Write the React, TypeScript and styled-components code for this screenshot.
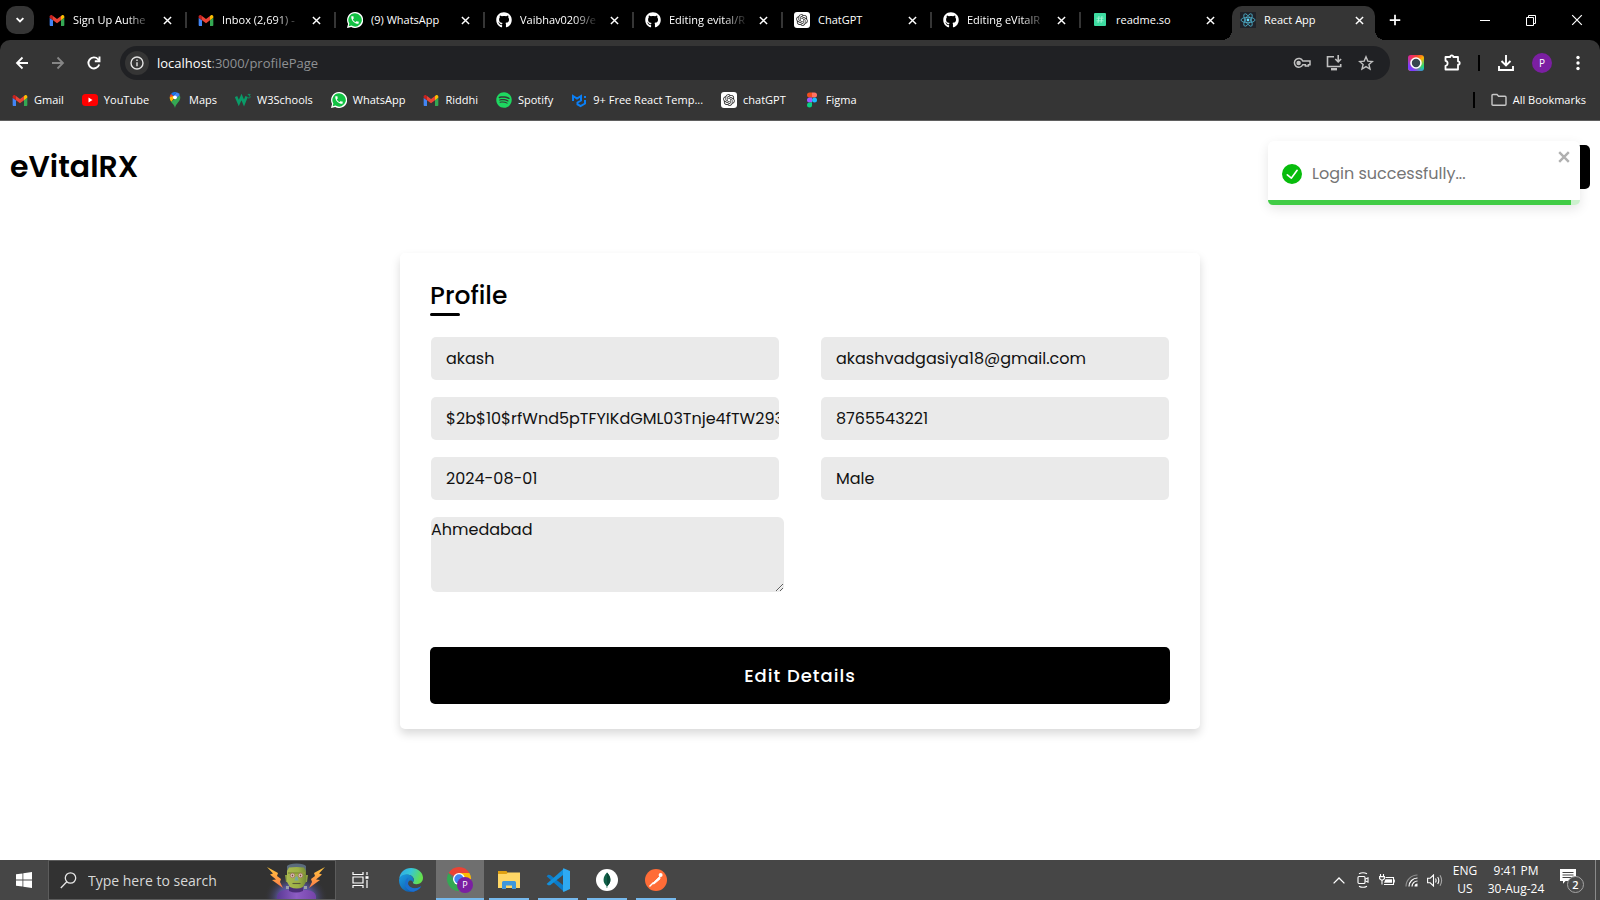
import React from "react";
import styled, { createGlobalStyle, css } from "styled-components";
import { FaGithub, FaSpotify } from "react-icons/fa";
import { RiOpenaiFill } from "react-icons/ri";

const uiFont = `"Segoe UI", "Open Sans", "Noto Sans", sans-serif`;
const pageFont = `"Poppins", "Inter", sans-serif`;

const GlobalStyle = createGlobalStyle`
  * { box-sizing: border-box; }
  body { margin: 0; background: #fff; }
  button, input, textarea { font: inherit; margin: 0; }
  button { border: 0; padding: 0; background: none; color: inherit; }
  a { color: inherit; text-decoration: none; }
`;

const Screen = styled.div`
  display: flex;
  flex-direction: column;
  min-height: 100vh;
`;

/* ---------- browser chrome ---------- */

const Browser = styled.header`
  background: #000;
  font-family: ${uiFont};
  font-size: 11px;
  line-height: 16px;
  color: #fff;
`;

const TabStrip = styled.div`
  display: flex;
  align-items: flex-start;
  height: 40px;
`;

const TabSearch = styled.button`
  display: grid;
  place-items: center;
  flex: none;
  width: 28px;
  height: 28px;
  margin: 6px 4px 0 6px;
  border-radius: 10px;
  background: #353535;
`;

const TabItem = styled.div<{ $active?: boolean; $divided?: boolean }>`
  position: relative;
  display: flex;
  align-items: center;
  flex: 0 1 149px;
  min-width: 0;
  height: 28px;
  margin-top: 6px;
  padding: 0 9px 0 11px;
  ${(p) =>
    p.$divided &&
    css`
      &::after {
        content: "";
        position: absolute;
        right: 0;
        top: 6px;
        width: 2px;
        height: 16px;
        background: #353535;
      }
    `}
  ${(p) =>
    p.$active &&
    css`
      flex-basis: 143px;
      height: 34px;
      margin-left: 2px;
      padding: 0 5px 6px 8px;
      border-radius: 10px 10px 0 0;
      background: #353535;
      &::before,
      &::after {
        content: "";
        position: absolute;
        bottom: 0;
        width: 10px;
        height: 10px;
      }
      &::before {
        right: 100%;
        background: radial-gradient(circle at 0 0, #000 10px, #353535 10px);
      }
      &::after {
        left: 100%;
        background: radial-gradient(circle at 100% 0, #000 10px, #353535 10px);
      }
    `}
`;

const TabTitle = styled.span<{ $fade?: boolean }>`
  flex: 1;
  min-width: 0;
  margin: 0 4px 0 8px;
  overflow: hidden;
  white-space: nowrap;
  ${(p) => p.$fade && css`mask-image: linear-gradient(to right, #000 68%, transparent);`}
`;

const IconButton = styled.button<{ $w?: number; $h?: number; $color?: string }>`
  display: grid;
  place-items: center;
  flex: none;
  width: ${(p) => p.$w ?? 16}px;
  height: ${(p) => p.$h ?? 16}px;
  color: ${(p) => p.$color ?? "#fff"};
`;

const WindowControls = styled.div`
  display: flex;
  margin-left: auto;
`;

const Toolbar = styled.div`
  display: flex;
  align-items: center;
  height: 46px;
  padding: 0 4px;
  border-radius: 10px 10px 0 0;
  background: #353535;
`;

const AddressBar = styled.div`
  display: flex;
  align-items: center;
  flex: 1;
  height: 34px;
  margin: 0 8px;
  padding: 0 8px 0 5px;
  border-radius: 17px;
  background: #202124;
`;

const SiteInfo = styled.button`
  display: grid;
  place-items: center;
  width: 24px;
  height: 24px;
  border-radius: 50%;
  background: #353535;
  color: #e3e3e3;
`;

const Url = styled.span`
  flex: 1;
  margin-left: 8px;
  font-size: 13px;
  color: #8f9194;
  b {
    font-weight: 400;
    color: #fff;
  }
`;

const BarDivider = styled.span`
  flex: none;
  width: 2px;
  height: 16px;
  margin: 0 8px;
  background: #000;
`;

const Avatar = styled.span`
  display: grid;
  place-items: center;
  width: 20px;
  height: 20px;
  border-radius: 50%;
  background: #7b1fa2;
  font-size: 10px;
  line-height: 20px;
`;

const Bookmarks = styled.nav`
  display: flex;
  align-items: center;
  gap: 18px;
  height: 35px;
  padding: 0 14px 6px 12px;
  background: #353535;
  border-bottom: 1px solid #5f5f5f;
`;

const Bookmark = styled.a`
  display: flex;
  align-items: center;
  gap: 6px;
  white-space: nowrap;
`;

const BookmarksEnd = styled.div`
  display: flex;
  align-items: center;
  gap: 8px;
  margin-left: auto;
`;

const Tile = styled.span`
  display: grid;
  place-items: center;
  flex: none;
  width: 16px;
  height: 16px;
  border-radius: 3px;
  background: #fff;
  color: #222;
`;

/* ---------- profile page ---------- */

const Page = styled.div`
  position: relative;
  display: flex;
  flex-direction: column;
  flex: 1;
  background: #fff;
  font-family: ${pageFont};
`;

const PageHeader = styled.div`
  display: flex;
  align-items: center;
  justify-content: space-between;
  padding: 24px 10px;
`;

const Brand = styled.h1`
  margin: 0;
  font-size: 30px;
  line-height: 44px;
  font-weight: 600;
  color: #000;
`;

const LogoutButton = styled.button`
  width: 100px;
  height: 44px;
  border-radius: 5px;
  background: #000;
`;

const Toast = styled.div`
  position: absolute;
  top: 20px;
  right: 20px;
  width: 312px;
  border-radius: 6px;
  background: #fff;
  color: #757575;
  box-shadow: 0 4px 12px rgba(0, 0, 0, 0.1);
`;

const ToastBody = styled.div`
  display: flex;
  align-items: center;
  gap: 10px;
  height: 59px;
  padding: 6px 14px 0;
  font-size: 16px;
  line-height: 24px;
`;

const ToastClose = styled.button`
  display: flex;
  align-self: flex-start;
  margin: 4px -4px 0 auto;
  color: #b0b0b0;
`;

const ToastTrack = styled.div`
  height: 5px;
  border-radius: 0 0 6px 6px;
  overflow: hidden;
  background: #cdf1ce;
`;

const ToastProgress = styled.div`
  height: 5px;
  background: #41cc46;
`;

const Card = styled.form`
  width: calc(100% - 20px);
  max-width: 800px;
  margin: 40px auto;
  padding: 25px 30px;
  border-radius: 5px;
  background: #fff;
  box-shadow: 0 5px 10px rgba(0, 0, 0, 0.15);
`;

const CardTitle = styled.h2`
  margin: 0 0 21px;
  font-size: 25px;
  line-height: 36px;
  font-weight: 500;
  color: #000;
  &::after {
    content: "";
    display: block;
    width: 30px;
    height: 3px;
    margin-top: -1px;
    border-radius: 5px;
    background: #000;
  }
`;

const Fields = styled.div`
  display: grid;
  grid-template-columns: 1fr 1fr;
  gap: 17px 42px;
  padding: 0 1px;
`;

const field = css`
  display: block;
  border: 0;
  outline: none;
  background: #eaeaea;
  font-size: 16px;
  line-height: 24px;
  color: #111;
`;

const TextField = styled.input`
  ${field}
  width: 100%;
  height: 43px;
  padding: 0 0 0 15px;
  border-radius: 5px;
`;

const AddressField = styled.textarea`
  ${field}
  width: calc(100% + 5px);
  height: 75px;
  padding: 1px 0 0;
  border-radius: 6px;
`;

const SubmitButton = styled.button`
  width: 100%;
  height: 57px;
  margin-top: 55px;
  border-radius: 5px;
  background: #000;
  color: #fff;
  font-size: 18px;
  font-weight: 500;
  letter-spacing: 1px;
`;

/* ---------- taskbar ---------- */

const Taskbar = styled.footer`
  display: flex;
  height: 40px;
  background: #464646;
  font-family: ${uiFont};
  color: #fff;
`;

const TaskButton = styled.button<{ $open?: boolean; $active?: boolean }>`
  display: flex;
  align-items: center;
  justify-content: center;
  flex: none;
  width: 48px;
  height: 40px;
  ${(p) =>
    p.$open &&
    css`
      background: linear-gradient(#76b9ed, #76b9ed) center bottom / ${p.$active ? 48 : 40}px 2px no-repeat
        ${p.$active ? "#6f6f6f" : "transparent"};
    `}
`;

const SearchBox = styled.label`
  display: flex;
  align-items: center;
  flex: none;
  width: 288px;
  padding: 0 5px 0 11px;
  border: 1px solid #5c5c5c;
  background: #323232;
`;

const SearchInput = styled.input`
  flex: 1;
  min-width: 0;
  margin-left: 11px;
  padding: 0;
  border: 0;
  outline: none;
  background: none;
  font-size: 14px;
  color: #d8d8d8;
  &::placeholder {
    color: #d8d8d8;
    opacity: 1;
  }
`;

const Apps = styled.div`
  display: flex;
  gap: 1px;
  margin-left: 3px;
`;

const Tray = styled.div`
  display: flex;
  align-items: center;
  margin-left: auto;
  font-size: 12px;
  line-height: 18px;
  text-align: center;
`;

const TrayText = styled.div<{ $w: number }>`
  width: ${(p) => p.$w}px;
  white-space: nowrap;
`;

const ShowDesktop = styled.button`
  width: 5px;
  height: 40px;
  border-left: 1px solid #8a8a8a;
`;

/* ---------- drawings ---------- */

const Gmail = () => (
  <svg width="16" height="11" viewBox="52 42 88 66">
    <path fill="#4285f4" d="M58 108h14V74L52 59v43c0 3.32 2.69 6 6 6" />
    <path fill="#34a853" d="M120 108h14c3.32 0 6-2.69 6-6V59l-20 15" />
    <path fill="#fbbc04" d="M120 48v26l20-15v-8c0-7.42-8.47-11.65-14.4-7.2" />
    <path fill="#ea4335" d="M72 74V48l24 18 24-18v26L96 92" />
    <path fill="#c5221f" d="M52 51v8l20 15V48l-5.6-4.2c-5.94-4.45-14.4-.22-14.4 7.2" />
  </svg>
);

const WhatsApp = () => (
  <svg width="16" height="16" viewBox="0 0 24 24">
    <path fill="#fff" d="M12 0a12 12 0 0 0-10.4 17.9L0 24l6.300-1.600A12 12 0 1 0 12 0z" />
    <path fill="#12c143" d="M12 2a10 10 0 0 0-8.500 15.200L2.600 21.400l4.200-1A10 10 0 1 0 12 2z" />
    <path
      transform="translate(4.500 4.500) scale(.62)"
      fill="#fff"
      d="M6.620 10.790c1.440 2.830 3.760 5.140 6.590 6.590l2.200-2.200c.27-.27.67-.36 1.020-.24 1.120.37 2.330.57 3.570.57.55 0 1 .45 1 1V20c0 .55-.45 1-1 1-9.390 0-17-7.610-17-17 0-.55.45-1 1-1h3.500c.55 0 1 .45 1 1 0 1.250.2 2.450.57 3.570.11.35.03.74-.25 1.020z"
    />
  </svg>
);

const OpenAI = () => (
  <Tile>
    <RiOpenaiFill size={14} />
  </Tile>
);

const Readme = () => (
  <svg width="16" height="16" viewBox="0 0 16 16">
    <rect x="2" y="1" width="12" height="13" rx="1" fill="#3ddba0" />
    <path d="M7 4 6 11M10 4 9 11M4.500 6.200h7M4.500 8.800h7" stroke="#a2f3d4" strokeWidth=".9" fill="none" />
  </svg>
);

const ReactLogo = () => (
  <svg width="16" height="16" viewBox="0 0 16 16">
    <rect width="16" height="16" fill="#20232a" />
    <g fill="none" stroke="#4fb3cf" strokeWidth=".8">
      <ellipse cx="8" cy="8" rx="7" ry="2.700" />
      <ellipse cx="8" cy="8" rx="7" ry="2.700" transform="rotate(60 8 8)" />
      <ellipse cx="8" cy="8" rx="7" ry="2.700" transform="rotate(120 8 8)" />
    </g>
    <circle cx="8" cy="8" r="1.400" fill="#61dafb" />
  </svg>
);

const Close = ({ size = 9, weight = 1.6 }: { size?: number; weight?: number }) => (
  <svg width={size} height={size} viewBox="0 0 10 10" fill="none" stroke="currentColor" strokeWidth={weight}>
    <path d="M1 1l8 8M9 1L1 9" />
  </svg>
);

const YouTube = () => (
  <svg width="16" height="16" viewBox="0 0 16 16">
    <rect y="2" width="16" height="12" rx="3.500" fill="#f00" />
    <path d="M6.500 5.500v5l4-2.500z" fill="#fff" />
  </svg>
);

const MapsPin = () => (
  <svg width="16" height="16" viewBox="0 0 16 16">
    <path fill="#34a853" d="M8 16c.5-2.500 1.500-3.600 2.800-5.200C12.200 9 13.300 7.800 13.300 5.300l-.5-2L4 9.800C5.600 12 7.400 13 8 16z" />
    <path fill="#4285f4" d="M9.700.3 6 4.600l2.500 2.600 4.300-4.100A5.300 5.300 0 0 0 9.700.3z" />
    <path fill="#1a73e8" d="M9.700.3A5.300 5.300 0 0 0 4 1.900l2.500 2.200z" />
    <path fill="#ea4335" d="M4 1.900a5.300 5.300 0 0 0-1.300 3.400L6 5.300l.7-1.100z" />
    <path fill="#fbbc04" d="M2.700 5.300c0 1.900.6 3.200 1.500 4.500l5-5.800L6.500 4z" />
    <circle cx="8" cy="5.300" r="1.900" fill="#fff" />
  </svg>
);

const W3 = () => (
  <svg width="16" height="16" viewBox="0 0 16 16" fill="none" stroke="#0a9b68">
    <path strokeWidth="2.600" d="M1 4.500l2.800 6.500L6.500 5 9 11l2.600-6.500" />
    <path strokeWidth=".9" d="M12.800 2.400h2.400l-1.200 1.400c2 .2 1.400 2.200-.2 2.200l-1-.4" />
  </svg>
);

const Mui = () => (
  <svg width="16" height="16" viewBox="0 0 16 16" fill="none" stroke="#0a7ff5" strokeWidth="2">
    <path d="M2 9V4l4 2.600L10 4v4.500L6.500 10.500v2l3 1.500 4.500-2.500V8M14 6V4" />
  </svg>
);

const Figma = () => (
  <svg width="16" height="16" viewBox="0 0 16 16">
    <path fill="#f24e1e" d="M8 .5H5.500a2.500 2.500 0 0 0 0 5H8z" />
    <path fill="#ff7262" d="M8 .5h2.500a2.500 2.500 0 0 1 0 5H8z" />
    <path fill="#a259ff" d="M8 5.500H5.500a2.500 2.500 0 0 0 0 5H8z" />
    <circle cx="10.500" cy="8" r="2.500" fill="#1abcfe" />
    <path fill="#0acf83" d="M5.500 10.500H8V13a2.500 2.500 0 1 1-2.500-2.500z" />
  </svg>
);

const Glyph = ({ d, size = 16, w = 2 }: { d: string; size?: number; w?: number }) => (
  <svg width={size} height={size} viewBox="0 0 16 16" fill="none" stroke="currentColor" strokeWidth={w}>
    <path d={d} />
  </svg>
);

const Key = () => (
  <svg width="18" height="12" viewBox="0 0 18 12" fill="none" stroke="currentColor" strokeWidth="1.500">
    <path d="M9.800 4H17v3.700h-1.600V9h-3V7.700H9.800a4.400 4.400 0 1 1 0-3.700z" />
    <circle cx="5.600" cy="5.900" r="1.500" fill="currentColor" />
  </svg>
);

const Install = () => (
  <svg width="18" height="16" viewBox="0 0 18 16" fill="none" stroke="currentColor" strokeWidth="1.600">
    <path d="M9 1.800H2.500v9.700h13.200V9" />
    <path d="M6 14.200h6" strokeWidth="2.400" />
    <path d="M13.200 0v6.500M10.300 4l2.900 2.900L16.100 4" />
  </svg>
);

const Star = () => (
  <svg width="16" height="16" viewBox="0 0 16 16" fill="none" stroke="currentColor" strokeWidth="1.400">
    <path d="M8 1.800l1.800 4.300 4.600.4-3.500 3 1.100 4.500L8 11.600 4 14l1.100-4.500-3.500-3 4.600-.4z" />
  </svg>
);

const ColorLens = () => (
  <svg width="16" height="16" viewBox="0 0 16 16">
    <defs>
      <linearGradient id="lensA" x1="0" y1="0" x2="1" y2="1">
        <stop offset="0" stopColor="#f0188c" />
        <stop offset=".3" stopColor="#f44336" />
        <stop offset=".55" stopColor="#ffb300" />
        <stop offset=".8" stopColor="#2ed573" />
        <stop offset="1" stopColor="#12b5e8" />
      </linearGradient>
      <linearGradient id="lensB" x1="1" y1="0" x2="0" y2="1">
        <stop offset=".45" stopColor="#7d3cff" stopOpacity="0" />
        <stop offset=".8" stopColor="#7d3cff" />
      </linearGradient>
    </defs>
    <rect width="16" height="16" rx="3" fill="url(#lensA)" />
    <rect width="16" height="16" rx="3" fill="url(#lensB)" />
    <circle cx="8" cy="8" r="5" fill="#37474f" stroke="#fff" strokeWidth="1.600" />
  </svg>
);

const Puzzle = () => (
  <svg width="18" height="18" viewBox="0 0 18 18" fill="none" stroke="#fff" strokeWidth="1.800" strokeLinejoin="round">
    <path d="M2.500 3h4.700a1.600 1.600 0 0 1 3.200 0H15v4.300a1.700 1.700 0 0 1 0 3.400V15.500H2.500v-3.700c2.800-.4 2.800-4.700 0-5z" />
  </svg>
);

const Dots = () => (
  <svg width="4" height="16" viewBox="0 0 4 16" fill="#fff">
    <circle cx="2" cy="2.500" r="1.700" />
    <circle cx="2" cy="8" r="1.700" />
    <circle cx="2" cy="13.500" r="1.700" />
  </svg>
);

const Folder = () => (
  <svg width="16" height="14" viewBox="0 0 16 14" fill="none" stroke="#c7c7c7" strokeWidth="1.400">
    <path d="M1 2.500q0-1 1-1h4l1.600 1.800H14q1 0 1 1v7q0 1-1 1H2q-1 0-1-1z" />
  </svg>
);

const InfoIcon = () => (
  <svg width="14" height="14" viewBox="0 0 14 14" fill="none" stroke="currentColor" strokeWidth="1.400">
    <circle cx="7" cy="7" r="6" />
    <path d="M7 6.200v4M7 3.600v1.500" />
  </svg>
);

const Reload = () => (
  <svg width="16" height="16" viewBox="0 0 16 16" fill="none" stroke="currentColor" strokeWidth="1.900">
    <path d="M13.200 9.500A5.500 5.500 0 1 1 12 4.200l1.200 1.300" />
    <path d="M13.500 1.500v4.700H8.800" />
  </svg>
);

const CheckBadge = () => (
  <svg width="20" height="20" viewBox="0 0 24 24" fill="#07bc0c">
    <path d="M12 0a12 12 0 1012 12A12.014 12.014 0 0012 0zm6.927 8.200l-6.845 9.289a1.011 1.011 0 01-1.430.188l-4.888-3.908a1 1 0 111.250-1.562l4.076 3.261 6.227-8.451a1 1 0 111.610 1.183z" />
  </svg>
);

const WindowsLogo = () => (
  <svg width="16" height="16" viewBox="0 0 16 16" fill="#fff">
    <path d="M0 2.300 6.500 1.400v6.200H0zM7.300 1.300 16 0v7.600H7.300zM0 8.400h6.500v6.200L0 13.700zM7.300 8.400H16V16l-8.700-1.300z" />
  </svg>
);

const Magnifier = () => (
  <svg width="17" height="17" viewBox="0 0 17 17" fill="none" stroke="#e6e6e6" strokeWidth="1.300">
    <circle cx="10.500" cy="6" r="5.200" />
    <path d="M6.800 9.800.8 16" />
  </svg>
);

const Monster = () => (
  <svg width="66" height="38" viewBox="0 0 66 38">
    <defs>
      <radialGradient id="glow" cx=".5" cy=".6" r=".5">
        <stop offset="0" stopColor="#8a7cf0" />
        <stop offset=".55" stopColor="#5d5bab" stopOpacity=".8" />
        <stop offset="1" stopColor="#323232" stopOpacity="0" />
      </radialGradient>
      <linearGradient id="bolt" x1="0" y1="0" x2="0" y2="1">
        <stop offset="0" stopColor="#ffc83d" />
        <stop offset="1" stopColor="#ff7a4a" />
      </linearGradient>
      <linearGradient id="skin" x1="0" y1="0" x2="1" y2="0">
        <stop offset="0" stopColor="#a9b950" />
        <stop offset=".6" stopColor="#9cb045" />
        <stop offset="1" stopColor="#768c36" />
      </linearGradient>
      <linearGradient id="coat" x1="0" y1="0" x2="1" y2="0">
        <stop offset="0" stopColor="#5a3a94" />
        <stop offset=".5" stopColor="#8d5cc4" />
        <stop offset="1" stopColor="#7443a8" />
      </linearGradient>
    </defs>
    <ellipse cx="32" cy="32" rx="32" ry="25" fill="url(#glow)" />
    <path fill="url(#bolt)" d="M3 6l11 6-1 3 4 3-1 3 3 6-11-8 4-.5-6-5 3-1z" />
    <path fill="url(#bolt)" d="M61 6l-11 6 1 3-4 3 1 3-3 6 11-8-4-.5 6-5-3-1z" />
    <path fill="url(#coat)" d="M13 38v-3q1-5 8-6h22q8 1 9 6v3z" />
    <path fill="#4a2d78" d="M25 26h14v4q-7 3-14 0z" />
    <rect x="22" y="25" width="3" height="3" fill="#9aa0a8" />
    <rect x="40" y="25" width="3" height="3" fill="#9aa0a8" />
    <path fill="#8da040" d="M21 14h3v7h-2zM41 14h3l-1 7h-2z" />
    <path fill="url(#skin)" d="M23 5h19v16l-3 5q-6 3-13 0l-3-5z" />
    <path fill="#5b6c7c" d="M23 10V5q2-2.500 9.500-2.500T42 5v5l-2-3.500q-7.500-1-15 0z" />
    <path fill="#8b9a3c" d="M24 11h17v2H24z" />
    <circle cx="28.500" cy="14.500" r="2.200" fill="#e8dfd0" stroke="#a0685c" strokeWidth=".8" />
    <circle cx="36.500" cy="14.500" r="2.200" fill="#e8dfd0" stroke="#a0685c" strokeWidth=".8" />
    <circle cx="28.500" cy="14.500" r=".9" fill="#7d4038" />
    <circle cx="36.500" cy="14.500" r=".9" fill="#7d4038" />
    <path fill="#74a6a0" d="M31.500 15.500h2l1 4h-4z" />
    <path stroke="#5b5a38" strokeWidth="1.100" d="M28.500 22.500h8" />
  </svg>
);

const TaskView = () => (
  <svg width="17" height="16" viewBox="0 0 17 16" fill="none" stroke="#fff" strokeWidth="1.200">
    <path d="M1 0v2.500h10V0M1 16v-2.500h10V16M1 5h10v6H1zM15 0v3M15 8v8" />
    <path d="M13.500 5.500h3" strokeWidth="2.600" />
  </svg>
);

const Edge = () => (
  <svg width="24" height="24" viewBox="0 0 24 24">
    <defs>
      <linearGradient id="edgeTop" x1="0" y1="0" x2="1" y2=".3">
        <stop offset="0" stopColor="#2fa8e8" />
        <stop offset=".5" stopColor="#36c6d8" />
        <stop offset="1" stopColor="#64e04e" />
      </linearGradient>
      <linearGradient id="edgeBody" x1="0" y1="0" x2="1" y2="1">
        <stop offset="0" stopColor="#1b9de2" />
        <stop offset="1" stopColor="#0c4a9e" />
      </linearGradient>
    </defs>
    <path fill="url(#edgeTop)" d="M.3 10.500C1 4.500 5.500 0 12 0c7 0 12 4.700 12 9.800 0 4-3 6.400-6.600 6.400-2.700 0-4-.9-3.200-2.200 1.400-2.200.6-5.700-3.600-6.900C6.800 6 2.500 7.200.3 10.500z" />
    <path fill="url(#edgeBody)" d="M.1 11.500C.8 8 4.200 6.300 8 6.500c4 .2 6.500 2.700 6.700 5.500 0 1-.3 1.600-.8 2.200-.8-2-3.300-2.300-4.500-.2-2 4.500 5 9.500 12.800 4.300C20.300 21.800 16.500 24 12 24 4.500 24-.6 18 .1 11.500z" />
    <path fill="#1c6fd0" d="M9.500 9.500c-4 2-4.500 8-1.500 11.200 1.700 1.800 4.400 3 6.500 3 3.400-.8 6.100-2.600 7.700-5.400-4.700 3-11 2.200-12.900-1.300-1.500-2.800-.3-5.700.2-7.500z" />
  </svg>
);

const Chrome = () => (
  <svg width="28" height="28" viewBox="0 0 28 28">
    <path fill="#ea4335" d="M13 13 2.600 7A12 12 0 0 1 23.400 7H13z" />
    <path fill="#fbbc04" d="M13 13V7h10.400A12 12 0 0 1 13 25z" />
    <path fill="#34a853" d="M13 25A12 12 0 0 1 2.600 7l6 8L18 16z" />
    <circle cx="13" cy="13" r="6" fill="#fff" />
    <circle cx="13" cy="13" r="4.700" fill="#4285f4" />
    <circle cx="19" cy="19" r="8" fill="#7b1fa2" />
    <text x="19" y="22" textAnchor="middle" fontSize="9" fill="#fff">P</text>
  </svg>
);

const Explorer = () => (
  <svg width="22" height="20" viewBox="0 0 22 20">
    <path fill="#e0a112" d="M0 1h8.500L10 3v3H0z" />
    <path fill="#ffd766" d="M0 4h8.500L10 2.500h12V18H0z" />
    <path fill="#3f97dc" d="M4 19v-6.500q0-1.500 1.500-1.500h11q1.500 0 1.500 1.500V19h-4v-3.500H8V19z" />
  </svg>
);

const VsCode = () => (
  <svg width="24" height="24" viewBox="0 0 24 24">
    <path fill="#0c7bc8" d="M.6 8.200 2.200 6.800l2 .1L18 17.800v5.900z" />
    <path fill="#1290dc" d="M.6 16 2.200 17.300l2-.1L18 6.300V.4z" />
    <path fill="#2eaaf2" d="M17.500.2 24 3v18l-6.500 2.900L17 23V1z" />
  </svg>
);

const Mongo = () => (
  <svg width="22" height="22" viewBox="0 0 22 22">
    <circle cx="11" cy="11" r="11" fill="#fff" />
    <path fill="#116149" d="M11 3.500c4.500 4.500 4.500 10 .4 13.500l-.2 2h-.5l-.2-2c-4-3.500-4-9 .5-13.500z" />
    <path fill="#0a4a38" d="M11 3.500c4.500 4.500 4.500 10 .4 13.500H11z" />
  </svg>
);

const Postman = () => (
  <svg width="22" height="22" viewBox="0 0 22 22">
    <circle cx="11" cy="11" r="11" fill="#ff6c37" />
    <circle cx="15.600" cy="6" r="2" fill="#fff" />
    <path d="M14.800 7.200 7.500 14.500 9 15l6-5z" fill="#fff" stroke="#fff" strokeWidth=".8" />
    <path d="M8.500 13.500 4.500 17.500" stroke="#fff" strokeWidth="1.400" />
  </svg>
);

const Chevron = () => (
  <svg width="12" height="7" viewBox="0 0 12 7" fill="none" stroke="#fff" strokeWidth="1.300">
    <path d="M.6 6.400 6 1l5.400 5.400" />
  </svg>
);

const Camera = () => (
  <svg width="12" height="16" viewBox="0 0 12 16" fill="none" stroke="#fff" strokeWidth="1.100">
    <rect x="1" y="4.500" width="7" height="7" rx="1" />
    <path d="M8 7.300 11 5.800v4.400L8 8.700M2 1.800Q6-.4 10 1.800M2 14.200q4 2.200 8 0" />
  </svg>
);

const Battery = () => (
  <svg width="16" height="12" viewBox="0 0 16 12" fill="none" stroke="#fff" strokeWidth="1.100">
    <path d="M6.500 3.500h8v7h-9.500M15.300 5.500v3M1.500 0v2.500M4.500 0v2.500M.6 2.600h4.800v2.200L3 6.500.6 4.800zM3 6.500v4" />
    <path d="M6.500 5.200h6.500v3.600H5z" fill="#fff" stroke="none" />
  </svg>
);

const Wifi = () => (
  <svg width="13" height="13" viewBox="0 0 13 13" fill="none" strokeWidth="1.200">
    <path stroke="#8f8f8f" d="M1 12.500A11.500 11.500 0 0 1 12.500 1" />
    <path stroke="#fff" d="M4 12.500A8.500 8.500 0 0 1 12.500 4M7 12.500A5.500 5.500 0 0 1 12.500 7" />
    <path fill="#fff" d="M9.500 12.500a3 3 0 0 1 3-3v3z" />
  </svg>
);

const Speaker = () => (
  <svg width="16" height="13" viewBox="0 0 16 13" fill="none" stroke="#fff" strokeWidth="1.100">
    <path d="M.6 4.200h2.600L6.500 1v11L3.200 8.800H.6zM8.500 4.500q1.200 2 0 4M10.700 3q2.200 3.500 0 7" />
    <path stroke="#a5a5a5" d="M13 1.200q3.200 5.300 0 10.600" />
  </svg>
);

const Notifications = () => (
  <svg width="26" height="26" viewBox="0 0 26 26">
    <path fill="#fff" d="M1 2h16v12H6.500L4 16.800V14H1z" />
    <path stroke="#464646" d="M3.500 5.500h11M3.500 8h11M3.500 10.500h11" />
    <circle cx="16.500" cy="17.500" r="8" fill="#4b4b4b" stroke="#a5a5a5" />
    <text x="16.500" y="21.500" textAnchor="middle" fontSize="11" fontWeight="600" fill="#fff">2</text>
  </svg>
);

/* ---------- content ---------- */

const tabs = [
  { icon: <Gmail />, title: "Sign Up Authe", fade: true },
  { icon: <Gmail />, title: "Inbox (2,691) -", fade: true },
  { icon: <WhatsApp />, title: "(9) WhatsApp" },
  { icon: <FaGithub size={16} />, title: "Vaibhav0209/e", fade: true },
  { icon: <FaGithub size={16} />, title: "Editing evital/R", fade: true },
  { icon: <OpenAI />, title: "ChatGPT" },
  { icon: <FaGithub size={16} />, title: "Editing eVitalR", fade: true },
  { icon: <Readme />, title: "readme.so" },
  { icon: <ReactLogo />, title: "React App", active: true },
];

const bookmarks = [
  { icon: <Gmail />, label: "Gmail" },
  { icon: <YouTube />, label: "YouTube" },
  { icon: <MapsPin />, label: "Maps" },
  { icon: <W3 />, label: "W3Schools" },
  { icon: <WhatsApp />, label: "WhatsApp" },
  { icon: <Gmail />, label: "Riddhi" },
  { icon: <FaSpotify size={16} color="#1ed760" />, label: "Spotify" },
  { icon: <Mui />, label: "9+ Free React Temp..." },
  { icon: <OpenAI />, label: "chatGPT" },
  { icon: <Figma />, label: "Figma" },
];

const fields = [
  { name: "Name", value: "akash" },
  { name: "Email", value: "akashvadgasiya18@gmail.com" },
  { name: "Password", value: "$2b$10$rfWnd5pTFYIKdGML03Tnje4fTW293" },
  { name: "Mobile", value: "8765543221" },
  { name: "Date of birth", value: "2024-08-01" },
  { name: "Gender", value: "Male" },
];

const taskApps = [
  { name: "Edge", icon: <Edge /> },
  { name: "Chrome", icon: <Chrome />, open: true, active: true },
  { name: "File Explorer", icon: <Explorer />, open: true },
  { name: "Visual Studio Code", icon: <VsCode />, open: true },
  { name: "MongoDB Compass", icon: <Mongo />, open: true },
  { name: "Postman", icon: <Postman />, open: true },
];

export default function App() {
  return (
    <Screen>
      <GlobalStyle />
      <Browser>
        <TabStrip>
          <TabSearch aria-label="Search tabs">
            <Glyph d="M3.500 5.500 8 10l4.500-4.500" size={12} w={2.4} />
          </TabSearch>
          {tabs.map((t, i) => (
            <TabItem key={t.title} $active={t.active} $divided={i < 7}>
              {t.icon}
              <TabTitle $fade={t.fade}>{t.title}</TabTitle>
              <IconButton $w={22} aria-label={`Close ${t.title}`}>
                <Close />
              </IconButton>
            </TabItem>
          ))}
          <IconButton $w={40} $h={40} aria-label="New tab">
            <Glyph d="M8 2v12M2 8h12" size={14} />
          </IconButton>
          <WindowControls>
            <IconButton $w={46} $h={40} aria-label="Minimize">
              <Glyph d="M3 8.500h10" w={1} />
            </IconButton>
            <IconButton $w={46} $h={40} aria-label="Restore">
              <Glyph d="M3.500 5.500h7v8h-7zM5.500 5.500v-2h7v8h-2" w={1} />
            </IconButton>
            <IconButton $w={46} $h={40} aria-label="Close window">
              <Close size={12} weight={1} />
            </IconButton>
          </WindowControls>
        </TabStrip>
        <Toolbar>
          <IconButton $w={36} $h={34} aria-label="Back">
            <Glyph d="M14 8H3M8.500 2.500 3 8l5.500 5.500" w={1.8} />
          </IconButton>
          <IconButton $w={36} $h={34} $color="#868686" aria-label="Forward">
            <Glyph d="M2 8h11M7.500 2.500 13 8l-5.500 5.500" w={1.8} />
          </IconButton>
          <IconButton $w={36} $h={34} aria-label="Reload">
            <Reload />
          </IconButton>
          <AddressBar>
            <SiteInfo aria-label="Site information">
              <InfoIcon />
            </SiteInfo>
            <Url>
              <b>localhost</b>:3000/profilePage
            </Url>
            <IconButton $w={32} $color="#c0c0c0" aria-label="Passwords"><Key /></IconButton>
            <IconButton $w={32} $color="#c0c0c0" aria-label="Install app"><Install /></IconButton>
            <IconButton $w={32} $color="#c0c0c0" aria-label="Bookmark this page"><Star /></IconButton>
          </AddressBar>
          <IconButton $w={36} aria-label="Lens extension"><ColorLens /></IconButton>
          <IconButton $w={36} $h={18} aria-label="Extensions"><Puzzle /></IconButton>
          <BarDivider />
          <IconButton $w={36} aria-label="Downloads">
            <Glyph d="M8 0v10M3.500 6 8 10.500 12.500 6M1 11v4h14v-4" w={1.9} />
          </IconButton>
          <IconButton $w={36} $h={20} aria-label="Account"><Avatar>P</Avatar></IconButton>
          <IconButton $w={36} aria-label="Menu"><Dots /></IconButton>
        </Toolbar>
        <Bookmarks>
          {bookmarks.map((b) => (
            <Bookmark key={b.label} href="#">
              {b.icon}
              {b.label}
            </Bookmark>
          ))}
          <BookmarksEnd>
            <BarDivider />
            <Bookmark href="#">
              <Folder />
              All Bookmarks
            </Bookmark>
          </BookmarksEnd>
        </Bookmarks>
      </Browser>

      <Page>
        <PageHeader>
          <Brand>eVitalRX</Brand>
          <LogoutButton aria-label="Log out" />
        </PageHeader>
        <Card onSubmit={(e) => e.preventDefault()}>
          <CardTitle>Profile</CardTitle>
          <Fields>
            {fields.map((f) => (
              <TextField key={f.name} aria-label={f.name} defaultValue={f.value} readOnly />
            ))}
            <AddressField aria-label="Address" defaultValue="Ahmedabad" readOnly />
          </Fields>
          <SubmitButton type="submit">Edit Details</SubmitButton>
        </Card>
        <Toast role="alert">
          <ToastBody>
            <CheckBadge />
            Login successfully...
            <ToastClose aria-label="Dismiss">
              <Close size={12} weight={2} />
            </ToastClose>
          </ToastBody>
          <ToastTrack>
            <ToastProgress style={{ width: "97%" }} />
          </ToastTrack>
        </Toast>
      </Page>

      <Taskbar>
        <TaskButton aria-label="Start"><WindowsLogo /></TaskButton>
        <SearchBox>
          <Magnifier />
          <SearchInput aria-label="Search" placeholder="Type here to search" />
          <Monster />
        </SearchBox>
        <TaskButton aria-label="Task view"><TaskView /></TaskButton>
        <Apps>
          {taskApps.map((a) => (
            <TaskButton key={a.name} aria-label={a.name} $open={a.open} $active={a.active}>
              {a.icon}
            </TaskButton>
          ))}
        </Apps>
        <Tray>
          <IconButton $w={24} aria-label="Show hidden icons"><Chevron /></IconButton>
          <IconButton $w={24} aria-label="Camera"><Camera /></IconButton>
          <IconButton $w={24} aria-label="Battery"><Battery /></IconButton>
          <IconButton $w={24} aria-label="Network"><Wifi /></IconButton>
          <IconButton $w={24} aria-label="Volume"><Speaker /></IconButton>
          <TrayText $w={36}>ENG<br />US</TrayText>
          <TrayText $w={66}>9:41 PM<br />30-Aug-24</TrayText>
          <IconButton $w={46} $h={40} aria-label="Notifications"><Notifications /></IconButton>
          <ShowDesktop aria-label="Show desktop" />
        </Tray>
      </Taskbar>
    </Screen>
  );
}
